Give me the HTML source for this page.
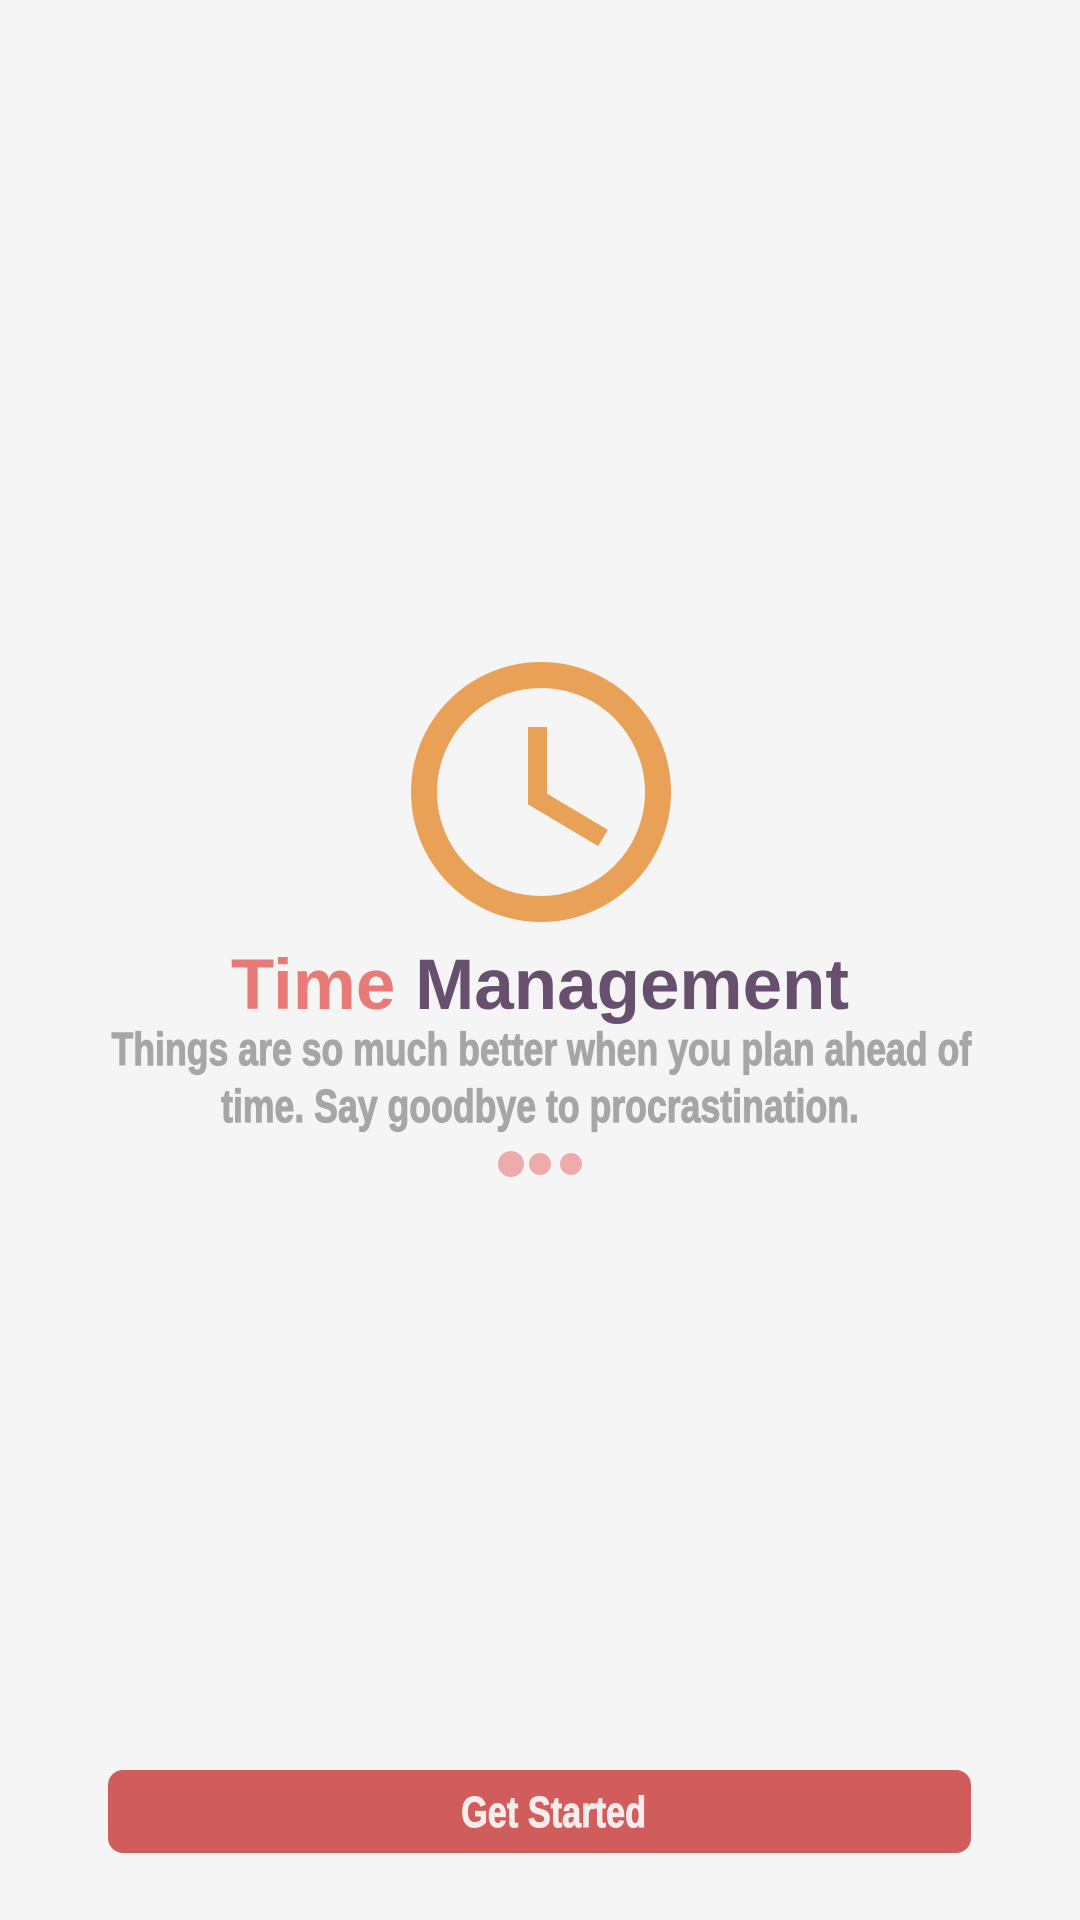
<!DOCTYPE html>
<html><head><meta charset="utf-8"><style>
html,body{margin:0;padding:0;background:#f5f5f5;width:1080px;height:1920px;overflow:hidden;position:relative;font-family:"Liberation Sans",sans-serif}
.title{position:absolute;left:0;width:1080px;top:946px;text-align:center;font-weight:bold;font-size:71px;line-height:80px;white-space:nowrap}
.sub{position:absolute;left:0;width:1080px;text-align:center;font-weight:bold;color:#a6a6a6;font-size:46px;line-height:50px;white-space:nowrap;transform:scaleX(0.775);transform-origin:540px 0;-webkit-text-stroke:1.2px #a6a6a6}
.btn{position:absolute;left:108px;top:1770px;width:863px;height:83px;border-radius:15px;background:#d05c5c;color:#f7ecec;text-align:center;line-height:86px;font-weight:bold;font-size:44px}
.btn span{display:inline-block;transform:scaleX(0.78);position:relative;left:14px;-webkit-text-stroke:1px #f7ecec}
.dot{position:absolute;border-radius:50%;background:#eeabab}
</style></head><body>
<svg style="position:absolute;left:0;top:0" width="1080" height="1000">
<circle cx="541" cy="792" r="117" fill="none" stroke="#e8a157" stroke-width="26"/>
<path d="M537.5 727 V799 L603 838" fill="none" stroke="#e8a157" stroke-width="19"/>
</svg>
<div class="title"><span style="color:#e87a78">Time</span> <span style="color:#66506e">Management</span></div>
<div class="sub" style="top:1024px;left:-10px">Things are so much better when you plan ahead of</div>
<div class="sub" style="top:1081px">time. Say goodbye to procrastination.</div>
<div class="dot" style="left:498px;top:1151px;width:26px;height:26px"></div>
<div class="dot" style="left:529px;top:1153px;width:22px;height:22px"></div>
<div class="dot" style="left:560px;top:1153px;width:22px;height:22px"></div>
<div class="btn"><span>Get Started</span></div>
</body></html>
